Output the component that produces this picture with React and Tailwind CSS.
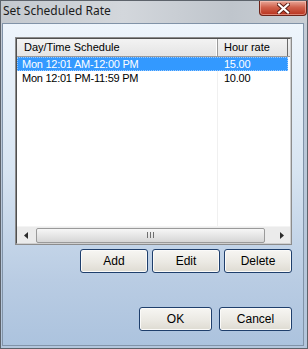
import React from 'react';

const rows = [
  { when: 'Mon 12:01 AM-12:00 PM', rate: '15.00', selected: true },
  { when: 'Mon 12:01 PM-11:59 PM', rate: '10.00', selected: false },
];

function WinButton({ children, className = '' }) {
  return (
    <button
      type="button"
      className={`flex items-center justify-center rounded-[3px] border border-[#1f3f6c] bg-[linear-gradient(#f7f6f3,#ebe9e3_55%,#dedbd2)] text-[12px] text-black shadow-[inset_0_0_0_1px_#fbfaf8] ${className}`}
    >
      {children}
    </button>
  );
}

function CloseButton() {
  return (
    <div className="flex h-[15px] w-[48px] items-center justify-center rounded-b-[4px] border border-t-0 border-[#6e2318] bg-[linear-gradient(#e9a899,#d0614c_45%,#b8321e)] shadow-[inset_0_0_0_1px_rgba(255,210,200,0.5)]">
      <svg width="13" height="11" viewBox="0 0 13 11">
        <path d="M2 1.5 L11 9.5 M11 1.5 L2 9.5" stroke="#5a1c14" strokeWidth="4" strokeLinecap="square" />
        <path d="M2 1.5 L11 9.5 M11 1.5 L2 9.5" stroke="#ffffff" strokeWidth="2.2" strokeLinecap="square" />
      </svg>
    </div>
  );
}

function HScrollBar() {
  return (
    <div className="flex h-[17px] items-center bg-[#ebebeb] border-t border-[#f4f4f4]">
      <div className="flex h-full w-[17px] items-center justify-center">
        <svg width="4" height="7" viewBox="0 0 4 7"><path d="M4 0 L0 3.5 L4 7 Z" fill="#2b2b2b" /></svg>
      </div>
      <div className="ml-[2px] flex h-[15px] w-[229px] items-center justify-center rounded-[2px] border border-[#9a9a9a] bg-[linear-gradient(#f6f6f6,#e6e6e6_50%,#d6d6d6)]">
        <div className="flex gap-[2px]">
          <span className="h-[6px] w-[1px] bg-[#6f6f6f]" />
          <span className="h-[6px] w-[1px] bg-[#6f6f6f]" />
          <span className="h-[6px] w-[1px] bg-[#6f6f6f]" />
        </div>
      </div>
      <div className="ml-auto flex h-full w-[17px] items-center justify-center">
        <svg width="4" height="7" viewBox="0 0 4 7"><path d="M0 0 L4 3.5 L0 7 Z" fill="#2b2b2b" /></svg>
      </div>
    </div>
  );
}

export default function App() {
  return (
    <div className="flex h-[349px] w-[308px] flex-col overflow-hidden border border-[#5d636b] bg-[linear-gradient(#c9ced5,#bcc8d6_20%,#b3c6dc)] font-['Liberation_Sans',Arial,sans-serif]">
      {/* title bar */}
      <div className="flex h-[22px] items-start justify-between bg-[linear-gradient(90deg,#c4c9cf,#d3d7dc_40%,#bfc5cc_75%,#c9ced4)]">
        <span className="pl-[2px] pt-[2px] font-['Noto_Sans','Open_Sans',sans-serif] text-[12px] leading-[16px] text-[#1b1b1b]">
          Set Scheduled Rate
        </span>
        <div className="mr-[0px]">
          <CloseButton />
        </div>
      </div>

      {/* client area */}
      <div className="mb-[2px] ml-[1px] mr-[3px] flex flex-1 flex-col border border-[#8193a8] bg-[linear-gradient(#eef5fc,#d8e5f2_45%,#b9cce3_80%,#acc3de)] px-[12px] pt-[13px]">
        {/* list view */}
        <div className="flex h-[208px] w-[277px] flex-col border border-[#8c8c8c]">
          <div className="flex flex-1 flex-col border border-t-[#4f4f4f] border-l-[#4f4f4f] border-r-[#d0d0d0] border-b-[#d0d0d0] bg-white">
            {/* header */}
            <div className="flex h-[18px] border-b border-[#9a9a9a] bg-[linear-gradient(#f3f3f3,#e4e4e4)] text-[11px] leading-[17px] text-black">
              <div className="w-[201px] border-r border-[#9a9a9a] pl-[7px] shadow-[inset_-1px_0_0_#ffffff]">Day/Time Schedule</div>
              <div className="w-[70px] border-r border-[#6a6a6a] pl-[6px]">Hour rate</div>
            </div>
            {/* rows */}
            <div className="relative flex flex-1 flex-col">
              <div className="absolute bottom-0 left-[200px] top-0 w-[1px] bg-[#f0f0f0]" />
              {rows.map((r) => (
                <div
                  key={r.when}
                  className={`relative flex h-[14px] w-[271px] text-[11px] leading-[14px] tracking-[-0.25px] ${
                    r.selected ? 'bg-[#3399ff] text-white outline-1 outline-dotted outline-offset-[-1px] outline-[#9ccaff]' : 'text-black'
                  }`}
                >
                  <div className="w-[201px] pl-[5px]">{r.when}</div>
                  <div className="pl-[6px]">{r.rate}</div>
                </div>
              ))}
            </div>
            <HScrollBar />
          </div>
        </div>

        {/* action buttons */}
        <div className="mt-[4px] flex w-[277px] justify-end gap-[4px]">
          <WinButton className="h-[24px] w-[68px]">Add</WinButton>
          <WinButton className="h-[24px] w-[68px]">Edit</WinButton>
          <WinButton className="h-[24px] w-[68px]">Delete</WinButton>
        </div>

        <div className="mt-[34px] flex w-[277px] justify-end gap-[7px]">
          <WinButton className="h-[24px] w-[73px]">OK</WinButton>
          <WinButton className="h-[24px] w-[73px]">Cancel</WinButton>
        </div>
      </div>
    </div>
  );
}
